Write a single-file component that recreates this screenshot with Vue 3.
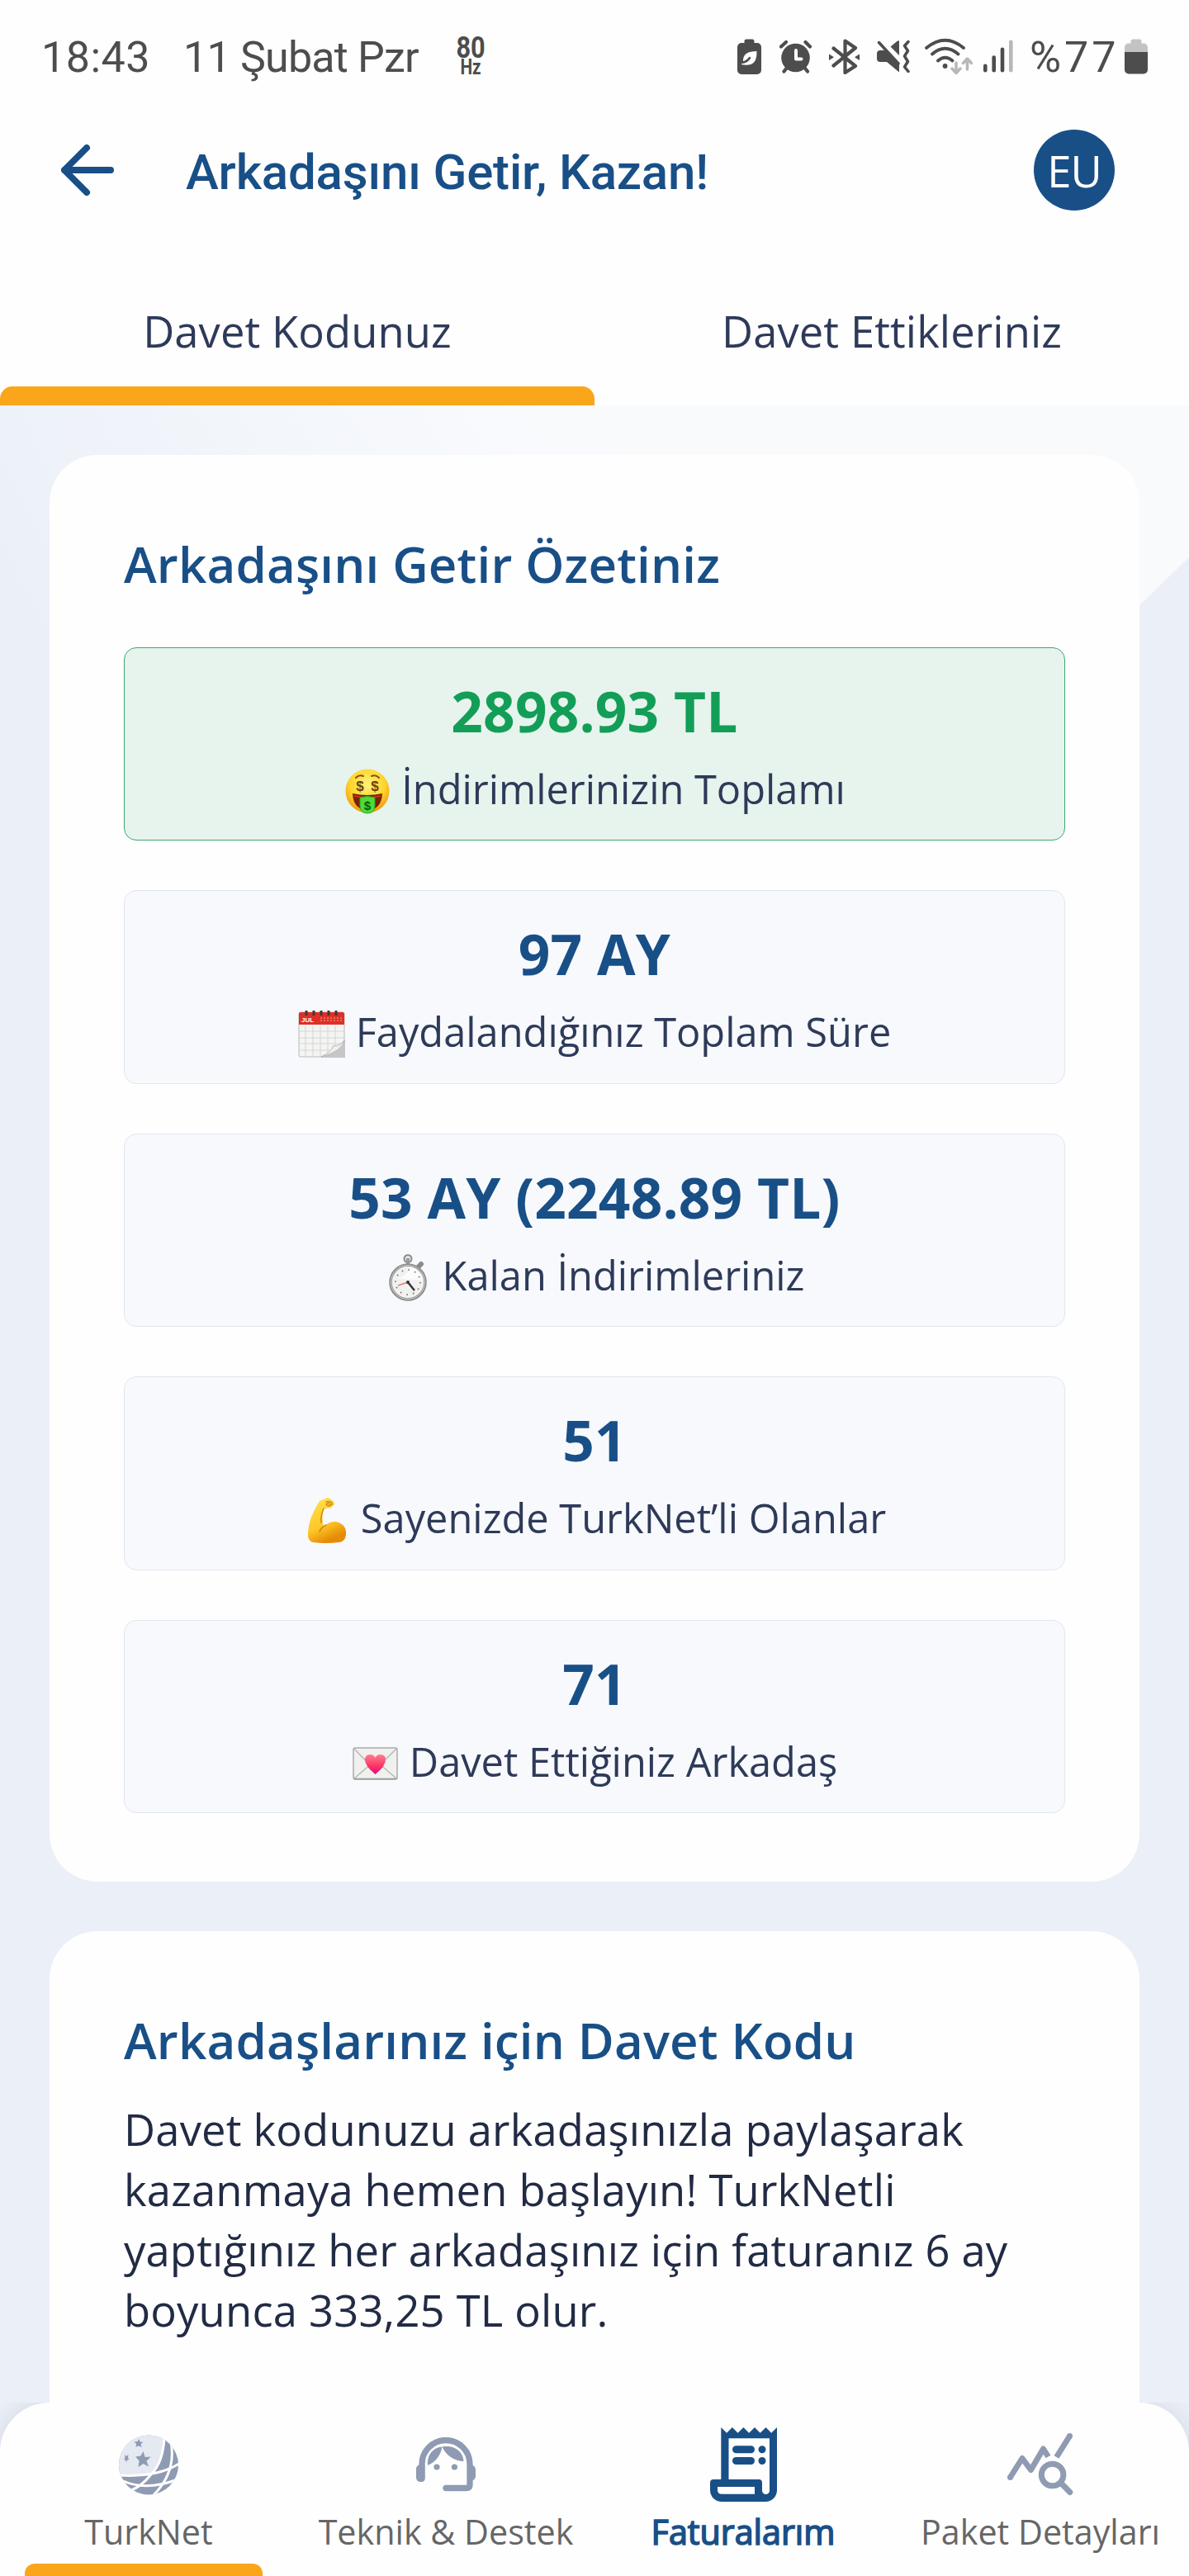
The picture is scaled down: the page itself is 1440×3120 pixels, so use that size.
<template>
  <div class="screen">
    <div class="status-bar">
      <span class="clock">18:43</span>
      <span class="date">11 Şubat Pzr</span>
      <span class="refresh-rate"><b>80</b><small>Hz</small></span>
      <div class="status-icons">
        <svg class="power-save" width="29" height="44" viewBox="0 0 29 44">
          <path d="M11 1.5h7a2.5 2.5 0 0 1 2.500 2.500V6H24a5 5 0 0 1 5 5v28a5 5 0 0 1-5 5H5a5 5 0 0 1-5-5V11a5 5 0 0 1 5-5h3.500V4A2.500 2.500 0 0 1 11 1.500z" />
          <path d="M23.500 16C13 16 6.500 19 7 29l-2.500 3q6 1.500 12 0Q24 29 23.500 16z" fill="#fff" />
          <path d="M15 24q-3 5-10 6" fill="none" stroke="#4d4d4d" stroke-width="2.500" stroke-linecap="round" />
        </svg>
        <svg class="alarm" width="39" height="44" viewBox="0 0 39 44">
          <circle cx="19.500" cy="24" r="17.300" />
          <path d="M2 10.500L8 5M37 10.500L31.500 5M5.500 40.500l4-5M34 40.500l-4-5" fill="none" stroke="#4d4d4d" stroke-width="4.200" stroke-linecap="round" />
          <path d="M20 15v10.500h6.500" fill="none" stroke="#fff" stroke-width="4" stroke-linecap="round" stroke-linejoin="round" />
        </svg>
        <svg class="bluetooth" width="37" height="44" viewBox="0 0 37 44">
          <path d="M5.500 12.500L32 34l-12.500 8V3.500L32 12 5.500 33.500" fill="none" stroke="#4d4d4d" stroke-width="4.200" stroke-linecap="round" stroke-linejoin="round" />
          <path d="M0 19.500v7.500l6-3.800zM37 19.500v7.500l-6-3.800z" />
        </svg>
        <svg class="muted" width="40" height="44" viewBox="0 0 40 44">
          <path d="M4 15h8l15 15v11.500L12 29H4a4 4 0 0 1-4-4v-6a4 4 0 0 1 4-4zM16.500 10.500L25 3.500q2-1 2 1V21z" />
          <path d="M2.500 5.500L26 31M38 4.500l-4.500 5 4 6-4 6.500 4 6.500-4 6.500 4.500 5.500" fill="none" stroke="#4d4d4d" stroke-width="3.500" stroke-linecap="round" stroke-linejoin="round" />
        </svg>
        <svg class="wifi" width="58" height="44" viewBox="0 0 58 44">
          <path d="M2 12Q24.600-6.500 47 12M9 19.500Q24.600 6 40.500 19.500M16 27.500q8.600-7.500 17.500 0" fill="none" stroke="#4d4d4d" stroke-width="3.800" stroke-linecap="round" />
          <circle cx="24.600" cy="34" r="2.900" />
          <path d="M38 30v12m-5-5l5 5.500 5-5.500M51.500 38V25.500m-5 5l5-5.500 5 5.500" fill="none" stroke="#b8b8b8" stroke-width="3.500" stroke-linecap="round" stroke-linejoin="round" />
        </svg>
        <svg class="signal" width="36" height="44" viewBox="0 0 36 44">
          <rect x="0" y="31.500" width="4.600" height="10" rx="2.300" />
          <rect x="10.400" y="21.300" width="4.600" height="20.200" rx="2.300" />
          <rect x="20.700" y="11.500" width="4.600" height="30" rx="2.300" />
          <rect x="31" y="2.500" width="4.600" height="39" rx="2.300" fill="#b8b8b8" />
        </svg>
        <span class="battery-level">%77</span>
        <svg class="battery" width="28" height="44" viewBox="0 0 28 44">
          <path d="M10 1.500h8a2.500 2.500 0 0 1 2.500 2.500v2.500H23a5 5 0 0 1 5 5V17H0v-5.500a5 5 0 0 1 5-5h2.500V4A2.500 2.500 0 0 1 10 1.500z" fill="#c3c3c3" />
          <path d="M0 17h28v21.500a5 5 0 0 1-5 5H5a5 5 0 0 1-5-5z" />
        </svg>
      </div>
    </div>

    <header class="header">
      <svg class="back" width="64" height="62" viewBox="0 0 64 62" @click="goBack">
        <path d="M31 4L4 31l27 27M4 31h56" fill="none" stroke="#194f87" stroke-width="8" stroke-linecap="round" stroke-linejoin="round" />
      </svg>
      <h1 class="title">Arkadaşını Getir, Kazan!</h1>
      <div class="avatar">EU</div>
    </header>

    <div class="tabs">
      <div
        v-for="(tab, index) in tabs"
        :key="tab"
        :class="['tab', { 'active': index === activeTab }]"
        @click="activeTab = index"
      >
        <span>{{ tab }}</span>
      </div>
    </div>

    <main class="content">
      <section class="card">
        <h2>Arkadaşını Getir Özetiniz</h2>
        <div class="stats">
          <div v-for="stat in stats" :key="stat.icon" :class="['stat', { 'highlight': stat.highlight }]">
            <div class="value">{{ stat.value }}</div>
            <div class="label">
              <svg v-if="stat.icon === 'money'" class="emoji" viewBox="0 0 57 57">
                <defs>
                  <radialGradient id="face" cx=".5" cy=".35" r=".65">
                    <stop offset="0" stop-color="#fff27a" />
                    <stop offset=".6" stop-color="#ffd52e" />
                    <stop offset="1" stop-color="#ee9a13" />
                  </radialGradient>
                </defs>
                <circle cx="29" cy="28" r="26.500" fill="url(#face)" />
                <path d="M15 12q4-4 9-2M34 10q5-2 9 2" fill="none" stroke="#83500c" stroke-width="2" stroke-linecap="round" />
                <path d="M11 31q18 4 36 0-1 20-18 20T11 31z" fill="#7a2105" />
                <path d="M13 33q16 4 32 0v2q-16 3-32 0z" fill="#bf3b18" />
                <path d="M20 36q9-3 18 0v10q0 9-9 9t-9-9z" fill="#4edb35" stroke="#27ac22" />
                <g fill="#67420c" font-family="Liberation Sans" font-weight="bold" text-anchor="middle">
                  <text x="20" y="28" font-size="17">$</text>
                  <text x="38" y="28" font-size="17">$</text>
                  <text x="29" y="51" font-size="15" fill="#075615">$</text>
                </g>
              </svg>
              <svg v-else-if="stat.icon === 'calendar'" class="emoji" viewBox="0 0 57 57">
                <rect x="1" y="2" width="55" height="54" rx="2" fill="#f4f4f2" stroke="#b9b9b9" />
                <path d="M1 17V4q0-2 2-2h51q2 0 2 2v13z" fill="#dd3025" />
                <path d="M1 25h55M1 33h55M1 40h55M1 48h38M9 18v37M18 18v37M27 18v37M36 18v37M45 18v25" fill="none" stroke="#d5d5d3" stroke-width="1" />
                <path d="M10 0v6M19 0v6M28 0v6M37 0v6M46 0v6" stroke="#453737" stroke-width="3" />
                <text x="4" y="14" class="month">JUL</text>
                <path d="M27 9h27M27 12h27" stroke="#f3a39b" stroke-dasharray="2 2" />
                <path d="M28 57Q44 51 43 43 53 43 57 34v23z" fill="#c6c6c6" />
                <path d="M28 56Q42 49 42 43q9 0 14-7-3 14-28 20z" fill="#eee" stroke="#a3a3a3" stroke-width=".7" />
              </svg>
              <svg v-else-if="stat.icon === 'stopwatch'" class="emoji" viewBox="0 0 57 57">
                <circle cx="28" cy="5.500" r="4.500" fill="#e2e2e2" stroke="#8b8b8b" stroke-width="2" />
                <path d="M26 5h4v7h-4z" fill="#999" />
                <path d="M41 15l3-3" stroke="#8b8b8b" stroke-width="6" stroke-linecap="round" />
                <circle cx="28" cy="34" r="21" fill="#f1f1f1" stroke="#8d8d8d" stroke-width="3.500" />
                <circle cx="28" cy="34" r="20.500" fill="none" stroke="#ccc" stroke-width="1" />
                <path d="M15 30q10-2 16-14 13 2 14 15z" fill="#fff" opacity=".8" />
                <circle cx="28" cy="34" r="15" fill="none" stroke="#8b7b6c" stroke-width="2" stroke-dasharray="1.500 6.354" />
                <path d="M28 34l-12 4" stroke="#ee7a72" stroke-width="1.500" />
                <path d="M28 34l8 10" stroke="#333" stroke-width="2.500" />
                <circle cx="28" cy="34" r="2" fill="#333" />
              </svg>
              <svg v-else-if="stat.icon === 'muscle'" class="emoji" viewBox="0 0 57 57">
                <defs>
                  <linearGradient id="skin" x1="0" y1="0" x2=".4" y2="1">
                    <stop offset="0" stop-color="#ffe151" />
                    <stop offset=".65" stop-color="#ffc928" />
                    <stop offset="1" stop-color="#e58c07" />
                  </linearGradient>
                </defs>
                <path d="M20 5l10-4q8 3 8 8l-4 4q-6 1-9 2-3 9 0 21 7-7 15-6 13 3 12 16-1 8-8 9-17 2-32 0-7-2-6-12Q7 25 20 5z" fill="url(#skin)" />
                <path d="M20 42q2-5 8-8M28 6q7-1 7 3-5 4-7 0 3-2 4 0M25 14q-4 10-3 17" fill="none" stroke="#cf8615" stroke-width="1.500" stroke-linecap="round" />
              </svg>
              <svg v-else class="emoji" viewBox="0 0 57 57">
                <defs>
                  <linearGradient id="heart" x1="0" y1="0" x2="0" y2="1">
                    <stop offset="0" stop-color="#ff7f8e" />
                    <stop offset=".6" stop-color="#fa3363" />
                    <stop offset="1" stop-color="#e8068d" />
                  </linearGradient>
                </defs>
                <rect x="2" y="9" width="53" height="38" rx="2" fill="#f0f0ef" stroke="#aaa" stroke-width="1.500" />
                <path d="M3 46l21-18M54 46L33 28M3 10l19 20q6 5 12 0l20-20" fill="none" stroke="#b9b9b9" stroke-width="1.500" />
                <path d="M3 46.500h51" stroke="#999" stroke-width="1.500" />
                <path d="M28.500 41Q16 31 16 23.500 16 17 22 17q5 0 6.500 4Q30 17 35 17q6 0 6 6.500Q41 31 28.500 41z" fill="url(#heart)" />
              </svg>
              <span>{{ stat.label }}</span>
            </div>
          </div>
        </div>
      </section>

      <section class="card invite">
        <h2>Arkadaşlarınız için Davet Kodu</h2>
        <p>
          Davet kodunuzu arkadaşınızla paylaşarak<br>
          kazanmaya hemen başlayın! TurkNetli<br>
          yaptığınız her arkadaşınız için faturanız 6 ay<br>
          boyunca 333,25 TL olur.
        </p>
      </section>
    </main>

    <nav class="bottom-nav">
      <div v-for="item in navItems" :key="item.icon" :class="['nav-item', item.icon]">
        <div class="nav-icon">
          <svg v-if="item.icon === 'globe'" width="72" height="73" viewBox="0 0 72 73">
            <clipPath id="globe-clip"><circle cx="36" cy="36.500" r="36" /></clipPath>
            <g clip-path="url(#globe-clip)">
              <path d="M0 0h72v73H0z" fill="#8f9bb3" />
              <path d="M-2-2h57v7q-1 27-15 42-20 4-42 2z" fill="#e4e9f2" />
              <path d="M55 2q-1 31-16 46-12 15-26 20M63 9q7 37-23 66M0 49q46 3 73-14M3 55q29 14 68-1" fill="none" stroke="#fff" stroke-width="3" />
            </g>
            <path d="M29.500 20l2.200 7 7-.5-5.200 5.200 2.500 6.800-6.500-3.500-6 4 1-7.500-4.500-5 6.500-1zM24.500 5l1 3.500 4 .2-3 2.500 1 4-3.500-2-3.500 1.500.7-3.700-2.800-2.500 4-.5zM7 24l2 2 2.500-2-.5 4 1.500 2-2.500.5-1 3-1-3L6 30l1.500-2z" fill="#8f9bb3" />
          </svg>
          <svg v-else-if="item.icon === 'support'" width="72" height="66" viewBox="0 0 72 66" fill="#8f9bb3">
            <path d="M7 50V32.500a29 29 0 0 1 58 0V58q0 3.500-4 3.500H36" fill="none" stroke="#8f9bb3" stroke-width="7.300" stroke-linecap="round" />
            <path d="M4 33h6.500v16q0 5-5 5T0 49V38q0-3 4-5zM67 33q5 2 5 6v8q0 4-5 6z" />
            <path d="M14 34C13 21 21 12 31.500 11.500 30 21 24 30 14 34zM31.500 11.500C46 9 57 17 57.500 29 47 29 36 22 31.500 11.500z" />
            <circle cx="25" cy="36" r="3.600" />
            <circle cx="46.400" cy="36" r="3.600" />
          </svg>
          <svg v-else-if="item.icon === 'bills'" width="81" height="90" viewBox="0 0 81 90" fill="#194f87">
            <path fill-rule="evenodd" d="M13.300 0l6.800 6.700L26.900 0l6.700 6.700L40.400 0l6.800 6.700L54 0l6.700 6.700L67.500 0l6.700 6.700L81 0v76a14 14 0 0 1-14 14H14A14 14 0 0 1 0 76v-9a4 4 0 0 1 4-4h9.300zM22.500 13.300V63H59a4 4 0 0 1 4 4v9.500a4.500 4.500 0 0 0 9 0V13.300zM9 72v4q0 4.700 5 4.700h40V72z" />
            <rect x="27" y="22.300" width="27" height="9" rx="4.500" />
            <rect x="27" y="36" width="27" height="9" rx="4.500" />
            <circle cx="63" cy="26.800" r="4.500" />
            <circle cx="63" cy="40.500" r="4.500" />
          </svg>
          <svg v-else width="80" height="76" viewBox="0 0 80 76" fill="none" stroke="#8f9bb3" stroke-width="7">
            <path d="M3.500 53.500L18 30.500l10.500 14L43.500 19l6 9.500M59.500 29l16-25.500" stroke-linejoin="round" />
            <path d="M3.500 53.500h.01M75.500 3.500h.01" stroke-linecap="round" />
            <circle cx="54.600" cy="50.500" r="13.300" />
            <path d="M66 61.500l9.800 10" stroke-linecap="round" />
          </svg>
        </div>
        <span>{{ item.label }}</span>
      </div>
    </nav>
  </div>
</template>

<script setup>
import { ref } from 'vue';

const activeTab = ref(0);

const tabs = ['Davet Kodunuz', 'Davet Ettikleriniz'];

const stats = [
    { value: '2898.93 TL', label: 'İndirimlerinizin Toplamı', icon: 'money', highlight: true },
    { value: '97 AY', label: 'Faydalandığınız Toplam Süre', icon: 'calendar' },
    { value: '53 AY (2248.89 TL)', label: 'Kalan İndirimleriniz', icon: 'stopwatch' },
    { value: '51', label: 'Sayenizde TurkNet’li Olanlar', icon: 'muscle' },
    { value: '71', label: 'Davet Ettiğiniz Arkadaş', icon: 'envelope' },
];

const navItems = [
    { label: 'TurkNet', icon: 'globe' },
    { label: 'Teknik & Destek', icon: 'support' },
    { label: 'Faturalarım', icon: 'bills' },
    { label: 'Paket Detayları', icon: 'package' },
];

function goBack() {
    window.history.back();
}
</script>

<style>
body {
    margin: 0;
    background: #fefefe;
}
</style>

<style scoped>
.screen {
    display: flex;
    flex-direction: column;
    width: 1440px;
    height: 3120px;
    overflow: hidden;
    background: #fefefe;
    color: #2e3a59;
    font-family: "Open Sans", sans-serif;
    box-sizing: border-box;
}

.screen svg {
    display: block;
    flex: none;
}

.status-bar {
    display: flex;
    align-items: center;
    height: 140px;
    flex: none;
    padding: 0 50px 0 50px;
    box-sizing: border-box;
    color: #4d4d4d;
    font-family: Roboto, sans-serif;
    font-size: 52px;
    line-height: 60px;
    white-space: nowrap;
}

.clock {
    width: 172px;
    letter-spacing: 0.5px;
}

.date {
    width: 331px;
    letter-spacing: -0.8px;
}

.refresh-rate {
    display: flex;
    flex-direction: column;
    align-items: center;
    width: 34px;
    margin-top: -3px;
    transform: scaleX(0.83);
}

.refresh-rate b {
    font-size: 37px;
    line-height: 27px;
}

.refresh-rate small {
    font-size: 25px;
    line-height: 22px;
    font-weight: bold;
}

.status-icons {
    display: flex;
    align-items: center;
    margin-left: auto;
    margin-top: -4px;
    fill: #4d4d4d;
}

.alarm {
    margin-left: 22px;
}

.bluetooth,
.muted {
    margin-left: 21px;
}

.wifi {
    margin-left: 18px;
}

.signal {
    margin-left: 13px;
}

.battery-level {
    width: 115px;
    margin-left: 20px;
    margin-top: 4px;
    letter-spacing: 4px;
}

.header {
    display: flex;
    align-items: center;
    height: 132px;
    flex: none;
    margin-bottom: 39px;
    padding: 0 90px 0 74px;
    color: #194f87;
}

.title {
    margin: 5px 0 0 87px;
    font-family: Roboto, sans-serif;
    font-size: 60px;
    font-weight: 500;
    line-height: 72px;
    letter-spacing: -0.17px;
    white-space: nowrap;
}

.avatar {
    width: 98px;
    height: 98px;
    margin-left: auto;
    border-radius: 50%;
    background: #194f87;
    color: #fff;
    font-size: 52.5px;
    line-height: 99px;
    text-align: center;
    letter-spacing: -1px;
}

.tabs {
    display: flex;
    height: 180px;
    flex: none;
}

.tab {
    flex: 1;
    border-bottom: 23px solid transparent;
    text-align: center;
    font-size: 52.5px;
    line-height: 180px;
    letter-spacing: 0.1px;
    height: 157px;
    position: relative;
}

.tab.active::after {
    content: "";
    position: absolute;
    left: 0;
    right: 0;
    bottom: -23px;
    height: 23px;
    border-radius: 15px 15px 0 0;
    background: #faa61a;
}

.content {
    flex: 1;
    min-height: 0;
    display: flex;
    flex-direction: column;
    gap: 60px;
    padding: 60px 60px 0;
    background: #ebeff7;
    overflow: hidden;
    position: relative;
}

/* light diagonal sheet behind the first card */
.content::before {
    content: "";
    position: absolute;
    left: 0;
    top: 0;
    width: 100%;
    height: 400px;
    background: linear-gradient(63deg, #ebeff7 6%, #eef2f9 15%, #f8fafd 48%, #f9fafc 58%);
    clip-path: polygon(0 0, 100% 0, 100% 184px, 1217px 100%, 0 100%);
}

.card {
    position: relative;
    flex: none;
    padding: 91px 90px 83px;
    border-radius: 58px;
    background: #fefefe;
}

.card h2 {
    margin: 0 0 60px;
    color: #194f87;
    font-size: 60px;
    font-weight: 600;
    line-height: 82px;
    letter-spacing: 0.17px;
    white-space: nowrap;
}

.card p {
    margin: 0;
    color: #222b45;
    font-size: 52.5px;
    line-height: 73.1px;
    letter-spacing: 0.2px;
    white-space: nowrap;
}

/* runs on below the bottom navigation */
.card.invite {
    padding-bottom: 240px;
}

.invite h2 {
    margin-bottom: 30px;
}

.stats {
    display: flex;
    flex-direction: column;
    gap: 60px;
}

.stat {
    height: 234.4px;
    padding-top: 29px;
    box-sizing: border-box;
    border: 1px solid #e1e7ef;
    border-radius: 15px;
    background: #f7f9fc;
    text-align: center;
}

.stat.highlight {
    border-color: #3fa570;
    background: #e7f4ed;
}

.value {
    color: #194f87;
    font-size: 67.5px;
    font-weight: bold;
    line-height: 94px;
    letter-spacing: 0.17px;
}

.highlight .value {
    color: #139e58;
}

.label {
    display: flex;
    justify-content: center;
    align-items: center;
    gap: 13px;
    height: 94px;
    font-size: 48.75px;
    line-height: 94px;
    white-space: nowrap;
}

.emoji {
    width: 57px;
    height: 57px;
    margin-top: 7px;
}

.month {
    fill: #fff;
    font: bold 8px "Liberation Sans", sans-serif;
}

.bottom-nav {
    display: flex;
    height: 210px;
    flex: none;
    margin-top: -60px;
    border-radius: 60px 60px 0 0;
    background: #fefefe;
    box-shadow: 0 0 30px rgba(46, 58, 89, 0.12);
    clip-path: inset(0);
    position: relative;
    z-index: 1;
}

.nav-item {
    flex: 1;
    display: flex;
    flex-direction: column;
    align-items: center;
    color: #666;
    font-size: 41.25px;
    line-height: 56px;
    white-space: nowrap;
    position: relative;
}

.nav-icon {
    display: flex;
    align-items: center;
    height: 90px;
    margin: 30px 0 8px;
}

.nav-item.bills {
    color: #194f87;
    -webkit-text-stroke: 1.6px #194f87;
}

.nav-item.globe::after {
    content: "";
    position: absolute;
    left: 30px;
    width: 288px;
    bottom: 0;
    height: 15px;
    border-radius: 12px 12px 0 0;
    background: #faa61a;
}
</style>
